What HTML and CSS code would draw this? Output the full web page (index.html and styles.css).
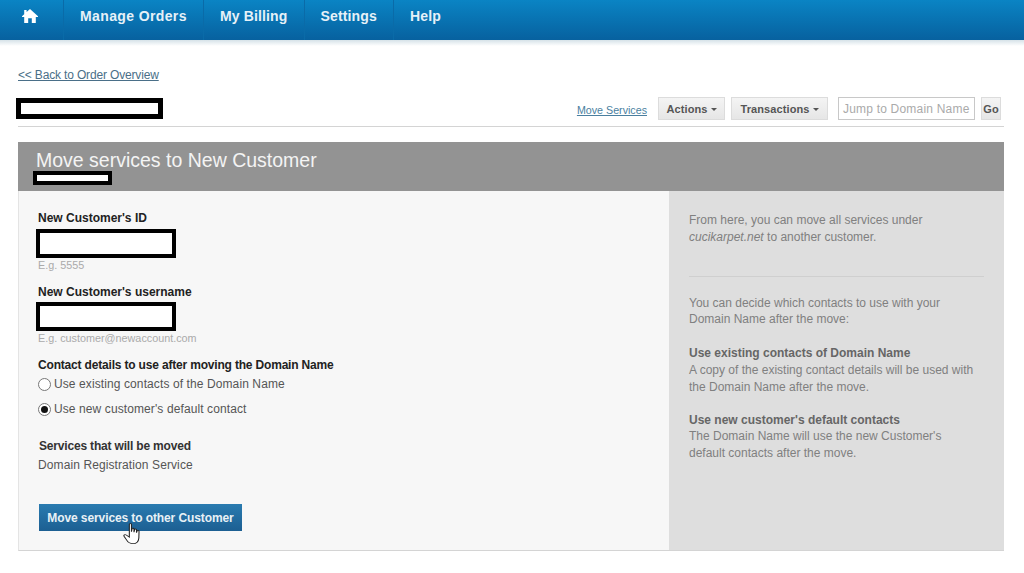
FILE: index.html
```html
<!DOCTYPE html>
<html lang="en">
<head>
<meta charset="utf-8">
<title>Move services to New Customer</title>
<link rel="stylesheet" href="styles.css">
</head>
<body>
<nav class="nav">
  <a class="nav-item home" aria-label="Home"><svg viewBox="0 0 16 14" width="16" height="14"><path d="M8 0 L16 7.2 L16 8 L13.8 8 L13.8 14 L9.8 14 L9.8 9.2 L6.2 9.2 L6.2 14 L2.2 14 L2.2 8 L0 8 L0 7.2 L2.2 5.2 L2.2 1 L4.6 1 L4.6 3 Z" fill="#fff"/></svg></a>
  <a class="nav-item nav-wide">Manage Orders</a>
  <a class="nav-item">My Billing</a>
  <a class="nav-item">Settings</a>
  <a class="nav-item">Help</a>
</nav>
<div class="nav-shadow"></div>
<main class="page">
  <a class="back">&lt;&lt; Back to Order Overview</a>
  <div class="titlebar">
    <div class="redact redact-title"></div>
    <div class="tools">
      <a class="tool-link">Move Services</a>
      <span class="btn btn-actions">Actions <i class="caret"></i></span>
      <span class="btn btn-trans">Transactions <i class="caret"></i></span>
      <span class="jump">Jump to Domain Name</span>
      <span class="btn btn-go">Go</span>
    </div>
  </div>
  <section class="panel">
    <header class="panel-head">
      <h1>Move services to New Customer</h1>
      <div class="redact redact-sub"></div>
    </header>
    <div class="panel-body">
      <div class="form">
        <label class="lbl">New Customer's ID</label>
        <div class="redact redact-input"></div>
        <p class="hint">E.g. 5555</p>
        <label class="lbl lbl-user">New Customer's username</label>
        <div class="redact redact-input"></div>
        <p class="hint">E.g. customer@newaccount.com</p>
        <label class="lbl lbl-contact">Contact details to use after moving the Domain Name</label>
        <div class="radio-row"><span class="radio"></span>Use existing contacts of the Domain Name</div>
        <div class="radio-row radio-row-2"><span class="radio on"></span>Use new customer's default contact</div>
        <div class="lbl lbl-services">Services that will be moved</div>
        <p class="service">Domain Registration Service</p>
        <div class="submit-wrap">
          <span class="submit">Move services to other Customer</span>
          <svg class="cursor" viewBox="0 0 18 25" width="19" height="22" preserveAspectRatio="none"><path d="M6 1.5 C6 .5 8 .5 8 1.5 L8 10 L8.6 6.5 C8.8 5.6 10.4 5.7 10.4 6.8 L10.4 10.5 L11 7.5 C11.2 6.6 12.8 6.7 12.8 7.8 L12.8 11 L13.4 9 C13.7 8.2 15.2 8.4 15.2 9.4 L15 17 C14.8 20 13.5 23.5 9.5 23.5 C6 23.5 4.5 21.5 3.5 19.5 L1 15 C.4 13.8 1.8 12.6 3 13.6 L6 16 Z" fill="#fff" stroke="#222" stroke-width="1"/></svg>
        </div>
      </div>
      <aside class="side">
        <p>From here, you can move all services under<br><em>cucikarpet.net</em> to another customer.</p>
        <hr class="side-rule">
        <p>You can decide which contacts to use with your<br>Domain Name after the move:</p>
        <p class="side-block"><b>Use existing contacts of Domain Name</b><br>A copy of the existing contact details will be used with<br>the Domain Name after the move.</p>
        <p class="side-block side-block-last"><b>Use new customer's default contacts</b><br>The Domain Name will use the new Customer's<br>default contacts after the move.</p>
      </aside>
    </div>
  </section>
</main>
</body>
</html>
```
FILE: styles.css
```css
* { box-sizing: border-box; }
html, body { margin: 0; padding: 0; }
body {
  width: 1024px;
  height: 573px;
  overflow: hidden;
  background: #fff;
  font-family: "Liberation Sans", Arial, sans-serif;
  font-size: 12px;
  color: #444;
}
p { margin: 0; }

.nav {
  display: flex;
  height: 40px;
  background: linear-gradient(#0a84c4, #07619f);
}
.nav-item {
  display: flex;
  align-items: center;
  height: 40px;
  padding: 0 16px 8px;
  color: #e6f1f8;
  font-size: 14px;
  font-weight: bold;
  letter-spacing: .15px;
  border-left: 1px solid #0a6ba8;
}
.nav-wide { letter-spacing: .38px; }
.home { width: 63px; padding-left: 22px; padding-right: 0; border-left: 0; }
.nav-shadow { height: 6px; background: linear-gradient(#d6e2e8, #fff); }

.page { padding: 0 20px 0 18px; }
.back {
  display: block;
  margin-top: 21px;
  height: 16px;
  line-height: 16px;
  color: #4a6f88;
  letter-spacing: -.16px;
  text-decoration: underline;
}
.titlebar {
  display: flex;
  justify-content: space-between;
  align-items: flex-start;
  height: 31px;
  margin-top: 13px;
  padding-top: 1px;
  border-bottom: 1px solid #d4d4d4;
}
.redact { border: 5px solid #000; background: #fff; }
.redact-title { width: 147px; height: 21px; margin: 1px 0 0 -2px; }
.tools { display: flex; align-items: center; height: 23px; margin-right: 3px; }
.tool-link { font-size: 10.7px; color: #4a7f9f; text-decoration: underline; margin-right: 11px; margin-top: 2px; }
.btn {
  display: flex;
  align-items: center;
  justify-content: center;
  height: 23px;
  background: linear-gradient(#f4f4f4, #e6e6e6);
  border: 1px solid #dcdcdc;
  color: #555;
  font-size: 11px;
  font-weight: bold;
  letter-spacing: .1px;
}
.btn-actions { width: 67px; margin-right: 6px; }
.btn-trans { width: 97px; margin-right: 10px; }
.btn-go { width: 20px; margin-left: 6px; }
.caret {
  display: inline-block;
  width: 0;
  height: 0;
  margin: 2px 0 0 3px;
  border: 3px solid transparent;
  border-top-color: #555;
  border-bottom: 0;
}
.jump {
  width: 137px;
  height: 23px;
  line-height: 22px;
  padding-left: 4px;
  border: 1px solid #c8c8c8;
  color: #aaa;
  letter-spacing: .2px;
  white-space: nowrap;
}

.panel { margin-top: 15px; width: 986px; border-bottom: 1px solid #d4d4d4; border-left: 1px solid #e4e4e4; }
.panel-head { height: 49px; margin-left: -1px; background: #939393; padding: 6px 0 0 18px; }
.panel-head h1 {
  margin: 0;
  font-size: 19.5px;
  line-height: 24px;
  font-weight: normal;
  color: #f4f4f4;
}
.redact-sub { width: 79px; height: 14px; margin: -1px 0 0 -3px; border-width: 4px; }
.panel-body { display: flex; height: 359px; }
.form { width: 650px; background: #f7f7f7; padding: 20px 0 0 19px; }
.lbl { display: block; font-weight: bold; color: #222; line-height: 14px; }
.redact-input { width: 140px; height: 29px; margin: 4px 0 0 -2px; border-width: 4px; }
.hint { font-size: 10.8px; color: #aaa; line-height: 12px; margin-top: 1px; }
.lbl-user { margin: 14px 0 -1px; }
.lbl-contact { margin-top: 14px; letter-spacing: -.18px; }
.radio-row { display: flex; align-items: center; height: 14px; margin-top: 5px; color: #555; letter-spacing: .1px; }
.radio-row-2 { margin-top: 11px; }
.radio {
  width: 13px;
  height: 13px;
  margin-right: 3px;
  border: 1px solid #777;
  border-radius: 50%;
  background: #fff;
  display: flex;
  align-items: center;
  justify-content: center;
}
.radio.on::after { content: ""; width: 7px; height: 7px; border-radius: 50%; background: #111; }
.lbl-services { margin: 23px 0 0 1px; color: #333; letter-spacing: -.18px; }
.service { margin-top: 5px; line-height: 14px; color: #555; letter-spacing: .1px; }
.submit-wrap { position: relative; margin: 32px 0 0 1px; width: 203px; height: 27px; }
.submit {
  display: flex;
  align-items: center;
  justify-content: center;
  height: 27px;
  background: linear-gradient(#2a7bb0, #1c5f92);
  color: #e8f1f6;
  font-weight: bold;
  letter-spacing: -.1px;
}
.cursor { position: absolute; left: 84px; top: 19px; }
.side { flex: 1; background: #dedede; padding: 21px 20px 0 20px; color: #808080; line-height: 16.8px; }
.side b { color: #666; }
.side em { font-style: italic; }
.side-rule { margin: 30px 0 18px; border: 0; border-top: 1px solid #cfcfcf; height: 0; }
.side-block { margin-top: 17px; }
.side-block-last { margin-top: 16px; }
```
